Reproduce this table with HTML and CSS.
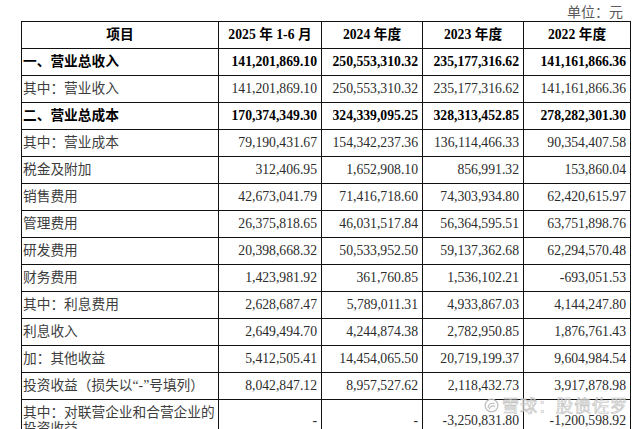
FILE: index.html
```html
<!DOCTYPE html>
<html lang="zh">
<head>
<meta charset="utf-8">
<link rel="stylesheet" href="styles.css">
</head>
<body>
<div class="page">
  <div class="unit">单位：元</div>
  <table class="fin">
    <colgroup>
      <col class="c-item"><col class="c-a"><col class="c-b"><col class="c-c"><col class="c-d">
    </colgroup>
    <thead>
      <tr class="bold">
        <th>项目</th><th>2025 年 1-6 月</th><th>2024 年度</th><th>2023 年度</th><th>2022 年度</th>
      </tr>
    </thead>
    <tbody>
      <tr class="bold"><td class="name">一、营业总收入</td><td>141,201,869.10</td><td>250,553,310.32</td><td>235,177,316.62</td><td>141,161,866.36</td></tr>
      <tr><td class="name">其中：营业收入</td><td>141,201,869.10</td><td>250,553,310.32</td><td>235,177,316.62</td><td>141,161,866.36</td></tr>
      <tr class="bold"><td class="name">二、营业总成本</td><td>170,374,349.30</td><td>324,339,095.25</td><td>328,313,452.85</td><td>278,282,301.30</td></tr>
      <tr><td class="name">其中：营业成本</td><td>79,190,431.67</td><td>154,342,237.36</td><td>136,114,466.33</td><td>90,354,407.58</td></tr>
      <tr><td class="name">税金及附加</td><td>312,406.95</td><td>1,652,908.10</td><td>856,991.32</td><td>153,860.04</td></tr>
      <tr><td class="name">销售费用</td><td>42,673,041.79</td><td>71,416,718.60</td><td>74,303,934.80</td><td>62,420,615.97</td></tr>
      <tr><td class="name">管理费用</td><td>26,375,818.65</td><td>46,031,517.84</td><td>56,364,595.51</td><td>63,751,898.76</td></tr>
      <tr><td class="name">研发费用</td><td>20,398,668.32</td><td>50,533,952.50</td><td>59,137,362.68</td><td>62,294,570.48</td></tr>
      <tr><td class="name">财务费用</td><td>1,423,981.92</td><td>361,760.85</td><td>1,536,102.21</td><td>-693,051.53</td></tr>
      <tr><td class="name">其中：利息费用</td><td>2,628,687.47</td><td>5,789,011.31</td><td>4,933,867.03</td><td>4,144,247.80</td></tr>
      <tr><td class="name">利息收入</td><td>2,649,494.70</td><td>4,244,874.38</td><td>2,782,950.85</td><td>1,876,761.43</td></tr>
      <tr><td class="name">加：其他收益</td><td>5,412,505.41</td><td>14,454,065.50</td><td>20,719,199.37</td><td>9,604,984.54</td></tr>
      <tr><td class="name">投资收益（损失以“-”号填列）</td><td>8,042,847.12</td><td>8,957,527.62</td><td>2,118,432.73</td><td>3,917,878.98</td></tr>
      <tr><td class="name">其中：对联营企业和合营企业的投资收益</td><td>-</td><td>-</td><td>-3,250,831.80</td><td>-1,200,598.92</td></tr>
    </tbody>
  </table>
  <div class="watermark">
    <svg class="wm-logo" viewBox="0 0 20 20" width="15" height="15">
      <circle cx="10" cy="10" r="8.5" fill="none" stroke="#b8b8b8" stroke-width="1.6"/>
      <path d="M5.5 12.5 C6 8 10 6 13.5 7.5 M7 14.5 C8.5 10.5 12 10 14.5 11" fill="none" stroke="#b8b8b8" stroke-width="1.6" stroke-linecap="round"/>
    </svg>
    <span class="wm-text">雪球：股债佐罗</span>
  </div>
</div>
</body>
</html>
```

FILE: styles.css
```css
html, body {
  margin: 0;
  padding: 0;
  background: #ffffff;
}

.page {
  position: relative;
  width: 638px;
  height: 429px;
  overflow: hidden;
  font-family: "Liberation Serif", "Noto Sans CJK SC", serif;
  font-size: 13.7px;
  color: #2b2b2b;
}

.unit {
  height: 21px;
  box-sizing: border-box;
  padding: 4px 15px 0 0;
  line-height: 17px;
  text-align: right;
  color: #5a5a5a;
  font-size: 14px;
}

.fin {
  margin-left: 21px;
  width: 609px;
  border-collapse: collapse;
  table-layout: fixed;
}

.c-item { width: 197px; }
.c-a { width: 103px; }
.c-b { width: 101px; }
.c-c { width: 101px; }
.c-d { width: 107px; }

.fin th,
.fin td {
  border: 1px solid #111;
  padding: 5px 4px 5px 4px;
  line-height: 16px;
  text-align: right;
  vertical-align: middle;
  white-space: nowrap;
}

.fin th {
  text-align: center;
  font-weight: 700;
  color: #000;
}

.fin td.name {
  text-align: left;
  padding-left: 1px;
  padding-right: 0;
  white-space: normal;
  color: #3d3d3d;
}

.fin tr.bold td,
.fin tr.bold td.name {
  font-weight: 700;
  color: #000;
}

.watermark {
  position: absolute;
  left: 484px;
  top: 395px;
  display: flex;
  align-items: center;
  gap: 3px;
  opacity: 0.9;
}

.wm-text {
  font-family: "Noto Sans CJK SC", sans-serif;
  font-size: 17px;
  line-height: 20px;
  color: rgba(255, 255, 255, 0.75);
  -webkit-text-stroke: 0.6px #b5b5b5;
  letter-spacing: 1px;
}
```
